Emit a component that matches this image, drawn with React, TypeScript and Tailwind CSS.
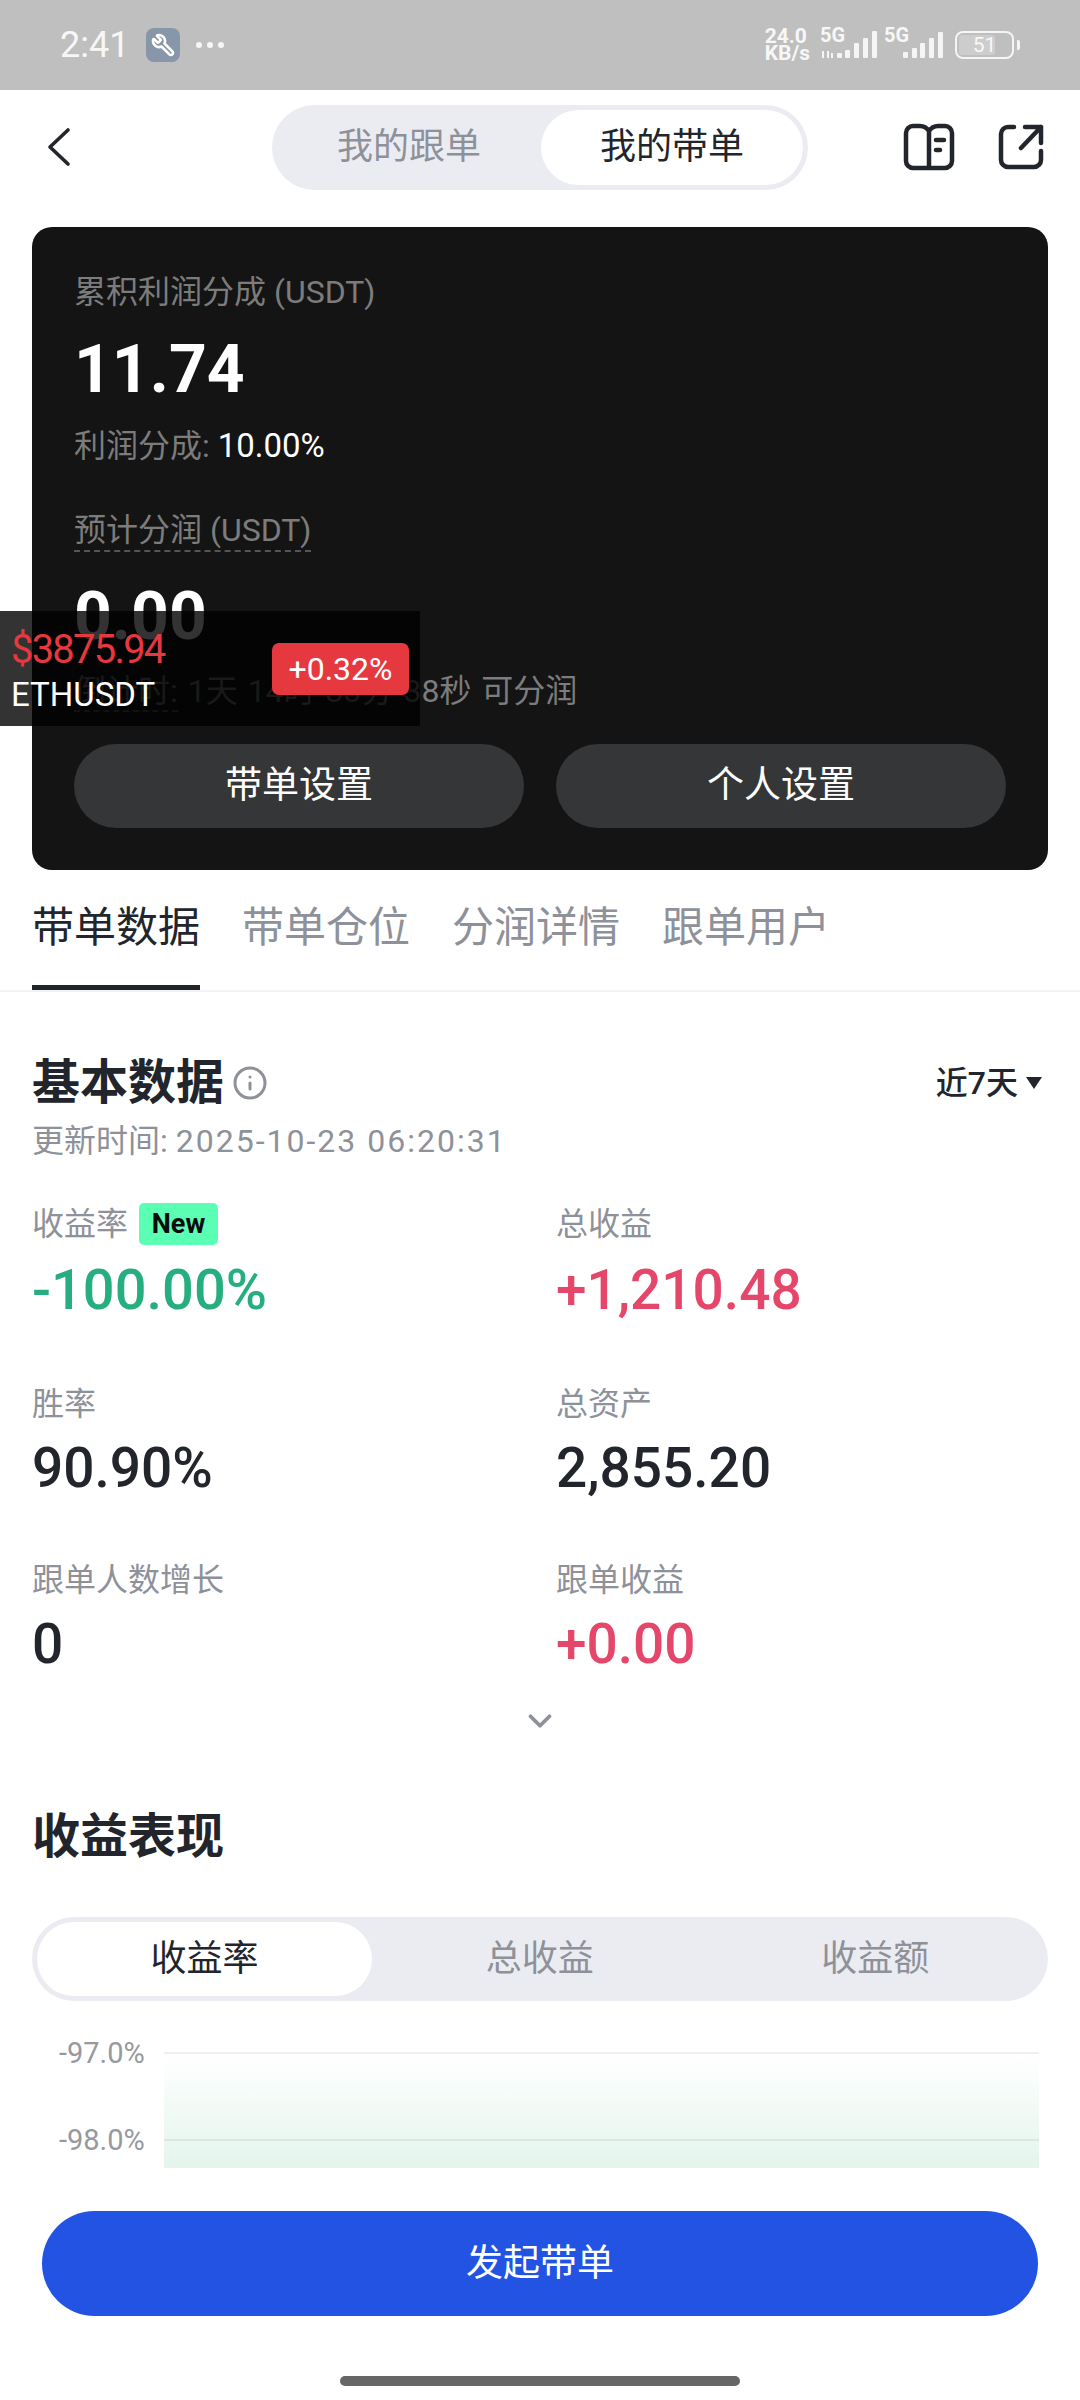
import React from "react";
import { ChevronDown, Info, Wrench } from "lucide-react";

const font = "font-['Roboto','Noto_Sans_CJK_SC',sans-serif]";

const stats = [
  { label: "胜率", value: "90.90%", color: "text-[#22252b]", height: "h-[176px]" },
  { label: "总资产", value: "2,855.20", color: "text-[#22252b]", height: "h-[176px]" },
  { label: "跟单人数增长", value: "0", color: "text-[#22252b]", height: "h-[126px]" },
  { label: "跟单收益", value: "+0.00", color: "text-[#e5476a]", height: "h-[126px]" },
];

const StatusBar = () => (
  <div className="flex h-[90px] items-center justify-between bg-[#bfbfbf] pl-[60px] pr-[60px] text-[#f7f7f7]">
    <div className="flex items-center">
      <span className="text-[36px] leading-none">2:41</span>
      <div className="ml-[17px] flex h-[34px] w-[34px] items-center justify-center rounded-[8px] bg-[#8797a9]">
        <Wrench size={24} strokeWidth={2.6} className="-scale-x-100 text-white" />
      </div>
      <div className="ml-[16px] flex gap-[5px]">
        <span className="h-[6px] w-[6px] rounded-full bg-[#f7f7f7]" />
        <span className="h-[6px] w-[6px] rounded-full bg-[#f7f7f7]" />
        <span className="h-[6px] w-[6px] rounded-full bg-[#f7f7f7]" />
      </div>
    </div>
    <div className="flex items-center">
      <div className="flex flex-col items-start text-[21px] font-bold leading-[17px]">
        <span>24.0</span>
        <span>KB/s</span>
      </div>
      <div className="relative ml-[10px] h-[34px] w-[58px]">
        <span className="absolute left-0 top-[-2px] text-[20px] font-bold leading-[18px]">5G</span>
        <svg width="58" height="34" viewBox="0 0 58 34" className="absolute left-0 top-0">
          <path d="M3 23v7M8 23v7M12 25v5" stroke="#f5f5f5" strokeWidth="2" />
          <rect x="17" y="25" width="5" height="5" rx="1" fill="#f5f5f5" />
          <rect x="25" y="22" width="5" height="8" rx="1" fill="#f5f5f5" />
          <rect x="34" y="15" width="5" height="15" rx="1" fill="#f5f5f5" />
          <rect x="43" y="10" width="5" height="20" rx="1" fill="#f5f5f5" />
          <rect x="52" y="3" width="5" height="27" rx="1" fill="#f5f5f5" />
        </svg>
      </div>
      <div className="relative ml-[6px] h-[34px] w-[60px]">
        <span className="absolute left-0 top-[-2px] text-[20px] font-bold leading-[18px]">5G</span>
        <svg width="60" height="34" viewBox="0 0 60 34" className="absolute left-0 top-0">
          <rect x="19" y="24" width="5" height="6" rx="1" fill="#f5f5f5" />
          <rect x="28" y="20" width="5" height="10" rx="1" fill="#f5f5f5" />
          <rect x="36" y="15" width="5" height="15" rx="1" fill="#f5f5f5" />
          <rect x="45" y="10" width="5" height="20" rx="1" fill="#f5f5f5" />
          <rect x="54" y="4" width="5" height="26" rx="1" fill="#f5f5f5" />
        </svg>
      </div>
      <div className="ml-[11px] flex items-center">
        <div className="relative flex h-[28px] w-[59px] items-center justify-center overflow-hidden rounded-[8px] border-2 border-[#f5f5f5]">
          <div className="absolute inset-y-[2px] left-[2px] w-[36px] rounded-[3px] bg-[#cdcdcd]" />
          <span className="relative text-[21px] leading-none">51</span>
        </div>
        <div className="ml-[3px] h-[10px] w-[3px] rounded-r-[2px] bg-[#f5f5f5]" />
      </div>
    </div>
  </div>
);

const Header = () => (
  <div className="flex h-[114px] items-center pl-[47px] pr-[36px]">
    <svg width="24" height="40" viewBox="0 0 24 40" fill="none" stroke="#22252b" strokeWidth="3.6" strokeLinecap="round" strokeLinejoin="round">
      <path d="M21 3 3 20l18 17" />
    </svg>
    <div className="ml-[201px] flex h-[85px] w-[536px] rounded-full bg-[#eaecf2] p-[5px]">
      <div className="flex flex-1 items-center justify-center text-[36px] text-[#8e9199]">我的跟单</div>
      <div className="flex w-[262px] items-center justify-center rounded-full bg-white text-[36px] text-[#22252b]">我的带单</div>
    </div>
    <div className="ml-auto flex items-center gap-[43px]">
      <svg width="52" height="48" viewBox="0 0 52 48" fill="none" stroke="#22252b" strokeWidth="4.5" strokeLinecap="round" strokeLinejoin="round">
        <path d="M26 8c-2-3-5-5-9-5H10a7 7 0 0 0-7 7v28a7 7 0 0 0 7 7h32a7 7 0 0 0 7-7V10a7 7 0 0 0-7-7h-7c-4 0-7 2-9 5Zm0 0v37" />
        <path d="M33 17h8M33 27h4" />
      </svg>
      <svg width="46" height="46" viewBox="0 0 46 46" fill="none" stroke="#22252b" strokeWidth="4.5" strokeLinecap="round" strokeLinejoin="round">
        <path d="M16 3H10a7 7 0 0 0-7 7v26a7 7 0 0 0 7 7h26a7 7 0 0 0 7-7v-9" />
        <path d="M23 24 43 3M27 3h16v16" />
      </svg>
    </div>
  </div>
);

const ProfitCard = () => (
  <div className="mx-[32px] mt-[23px] h-[643px] rounded-[20px] bg-[#141414] px-[42px] pt-[45px]">
    <div className="text-[32px] leading-[40px] text-[#7c7c7c]">累积利润分成 (USDT)</div>
    <div className="mt-[19px] text-[66px] font-bold leading-[78px] text-white">11.74</div>
    <div className="mt-[17px] text-[32px] leading-[40px] text-[#7c7c7c]">
      利润分成: <span className="text-[33px] text-white">10.00%</span>
    </div>
    <div className="mt-[44px] w-fit border-b-2 border-dashed border-[#555] text-[32px] leading-[40px] text-[#7c7c7c]">预计分润 (USDT)</div>
    <div className="mt-[26px] text-[66px] font-bold leading-[78px] text-white">0.00</div>
    <div className="mt-[15px] text-[32px] leading-[40px] text-[#7c7c7c] [word-spacing:2px]">
      <span className="border-b-2 border-dashed border-[#555]">倒计时:</span> 1天 14时 33分 38秒 可分润
    </div>
    <div className="mt-[33px] flex gap-[32px]">
      <div className="flex h-[84px] flex-1 items-center justify-center rounded-full bg-[#343637] text-[37px] text-white">带单设置</div>
      <div className="flex h-[84px] flex-1 items-center justify-center rounded-full bg-[#343637] text-[37px] text-white">个人设置</div>
    </div>
  </div>
);

const Tabs = () => (
  <div className="mt-[28px] flex h-[94px] gap-[42px] border-b-2 border-[#f2f3f5] px-[32px] text-[42px] leading-[59px] text-[#8e9199]">
    <div className="h-[92px] border-b-[5px] border-[#22252b] text-[#22252b]">带单数据</div>
    <div>带单仓位</div>
    <div>分润详情</div>
    <div>跟单用户</div>
  </div>
);

const BasicData = () => (
  <div className="px-[32px] pt-[61px]">
    <div className="flex items-center">
      <span className="text-[48px] font-bold leading-[60px] text-[#22252b]">基本数据</span>
      <Info size={36} strokeWidth={2} className="ml-[8px] text-[#8e9199]" />
      <span className="ml-auto mr-[8px] text-[32px] font-medium text-[#22252b]">近7天</span>
      <span className="mr-[6px] h-0 w-0 border-x-[8px] border-t-[12px] border-x-transparent border-t-[#22252b]" />
    </div>
    <div className="mt-[6px] text-[32px] leading-[44px] text-[#8e9199]">
      更新时间: <span className="tracking-[2px]">2025-10-23 06:20:31</span>
    </div>
    <div className="mt-[39px] grid grid-cols-[524px_1fr]">
      <div className="h-[180px]">
        <div className="flex h-[44px] items-center">
          <span className="text-[32px] text-[#8e9199]">收益率</span>
          <span className="ml-[11px] flex h-[42px] w-[79px] items-center justify-center rounded-[5px] bg-[#5affb4] text-[27px] font-bold text-[#0c0c0c]">New</span>
        </div>
        <div className="mt-[11px] text-[56px] font-medium leading-[66px] text-[#27ae7e]">-100.00%</div>
      </div>
      <div className="h-[180px]">
        <div className="h-[44px] text-[32px] leading-[44px] text-[#8e9199]">总收益</div>
        <div className="mt-[11px] text-[55px] font-medium leading-[66px] text-[#e5476a]">+1,210.48</div>
      </div>
      {stats.map((s) => (
        <div key={s.label} className={s.height}>
          <div className="h-[44px] text-[32px] leading-[44px] text-[#8e9199]">{s.label}</div>
          <div className={`mt-[9px] text-[55px] font-medium leading-[66px] ${s.color}`}>{s.value}</div>
        </div>
      ))}
    </div>
    <div className="mt-[18px] flex justify-center">
      <ChevronDown size={38} strokeWidth={2.4} className="text-[#8e9199]" />
    </div>
  </div>
);

const ChartSection = () => (
  <div className="px-[32px] pt-[67px]">
    <div className="text-[48px] font-bold leading-[60px] text-[#22252b]">收益表现</div>
    <div className="mt-[50px] flex h-[84px] rounded-full bg-[#eaecf2] p-[5px] text-[36px]">
      <div className="flex w-[335px] items-center justify-center rounded-full bg-white text-[#22252b]">收益率</div>
      <div className="flex flex-1 items-center justify-center text-[#8e9199]">总收益</div>
      <div className="flex flex-1 items-center justify-center text-[#8e9199]">收益额</div>
    </div>
    <div className="mt-[36px] flex">
      <div className="flex w-[132px] flex-col gap-[55px] pl-[27px] text-[29px] leading-[32px] text-[#96999f]">
        <span>-97.0%</span>
        <span>-98.0%</span>
      </div>
      <div className="relative mr-[9px] mt-[15px] h-[117px] flex-1 border-t-2 border-[#eeeff2] bg-gradient-to-b from-white to-[#e3f5ec]">
        <div className="absolute left-0 right-0 top-[85px] h-[2px] bg-[#d9e8e0]" />
      </div>
    </div>
  </div>
);

export default function App() {
  return (
    <div className={`relative h-[2400px] w-[1080px] overflow-hidden bg-white ${font}`}>
      <StatusBar />
      <Header />
      <ProfitCard />
      <Tabs />
      <BasicData />
      <ChartSection />

      {/* floating ticker */}
      <div className="absolute left-0 top-[611px] h-[115px] w-[420px] bg-black/80 pl-[11px]">
        <div className="pt-[17px] text-[40px] leading-[44px] tracking-[-1.8px] text-[#e5383f]">$3875.94</div>
        <div className="mt-[3px] text-[33px] leading-[40px] text-white">ETHUSDT</div>
        <div className="absolute left-[272px] top-[32px] flex h-[52px] w-[137px] items-center justify-center rounded-[7px] bg-[#e5383f] text-[32px] text-white">+0.32%</div>
      </div>

      {/* bottom action */}
      <div className="absolute inset-x-0 bottom-0 h-[232px] bg-white px-[42px] pt-[43px]">
        <div className="flex h-[105px] items-center justify-center rounded-full bg-[#2353e3] text-[37px] text-white">发起带单</div>
        <div className="mx-auto mt-[60px] h-[10px] w-[400px] rounded-full bg-[#666]" />
      </div>
    </div>
  );
}
